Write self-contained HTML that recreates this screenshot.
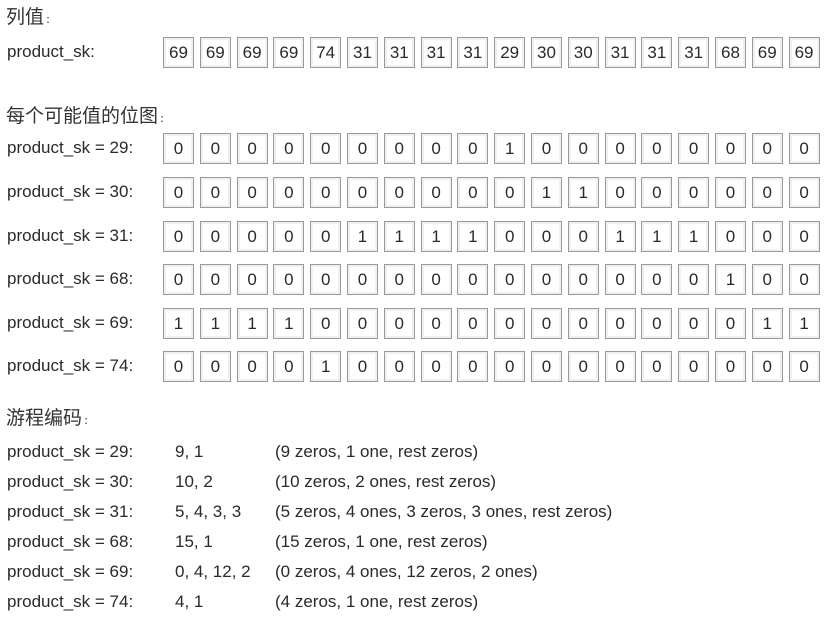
<!DOCTYPE html>
<html><head><meta charset="utf-8"><style>
body{margin:0;width:825px;height:621px;background:#fff;position:relative;overflow:hidden;font-family:"Liberation Sans","Noto Sans CJK SC",sans-serif;color:#2a2a2a;}
.t{position:absolute;white-space:nowrap;font-size:17px;line-height:20px;}
.h{position:absolute;white-space:nowrap;font-size:19px;line-height:22px;font-family:"Noto Sans CJK SC","WenQuanYi Zen Hei",sans-serif;color:#333;}
.h small{font-size:11px;}
.row{position:absolute;left:163px;display:flex;}
.b{width:29px;height:29px;border:1px solid #9a9a9a;box-shadow:inset 0 0 0 2px #f0f0f0;margin-right:5.8px;display:flex;align-items:center;justify-content:center;font-size:17px;color:#2a2a2a;box-sizing:content-box;}
</style></head><body>
<div class="h" style="left:6px;top:5px">列值<small> :</small></div>
<div class="t" style="left:7px;top:42px">product_sk:</div>
<div class="row" style="top:37px"><div class="b">69</div><div class="b">69</div><div class="b">69</div><div class="b">69</div><div class="b">74</div><div class="b">31</div><div class="b">31</div><div class="b">31</div><div class="b">31</div><div class="b">29</div><div class="b">30</div><div class="b">30</div><div class="b">31</div><div class="b">31</div><div class="b">31</div><div class="b">68</div><div class="b">69</div><div class="b">69</div></div>

<div class="h" style="left:6px;top:104px">每个可能值的位图<small> :</small></div>

<div class="t" style="left:7px;top:138px">product_sk = 29:</div>
<div class="row" style="top:133px"><div class="b">0</div><div class="b">0</div><div class="b">0</div><div class="b">0</div><div class="b">0</div><div class="b">0</div><div class="b">0</div><div class="b">0</div><div class="b">0</div><div class="b">1</div><div class="b">0</div><div class="b">0</div><div class="b">0</div><div class="b">0</div><div class="b">0</div><div class="b">0</div><div class="b">0</div><div class="b">0</div></div>

<div class="t" style="left:7px;top:182px">product_sk = 30:</div>
<div class="row" style="top:177px"><div class="b">0</div><div class="b">0</div><div class="b">0</div><div class="b">0</div><div class="b">0</div><div class="b">0</div><div class="b">0</div><div class="b">0</div><div class="b">0</div><div class="b">0</div><div class="b">1</div><div class="b">1</div><div class="b">0</div><div class="b">0</div><div class="b">0</div><div class="b">0</div><div class="b">0</div><div class="b">0</div></div>

<div class="t" style="left:7px;top:226px">product_sk = 31:</div>
<div class="row" style="top:221px"><div class="b">0</div><div class="b">0</div><div class="b">0</div><div class="b">0</div><div class="b">0</div><div class="b">1</div><div class="b">1</div><div class="b">1</div><div class="b">1</div><div class="b">0</div><div class="b">0</div><div class="b">0</div><div class="b">1</div><div class="b">1</div><div class="b">1</div><div class="b">0</div><div class="b">0</div><div class="b">0</div></div>

<div class="t" style="left:7px;top:269px">product_sk = 68:</div>
<div class="row" style="top:264px"><div class="b">0</div><div class="b">0</div><div class="b">0</div><div class="b">0</div><div class="b">0</div><div class="b">0</div><div class="b">0</div><div class="b">0</div><div class="b">0</div><div class="b">0</div><div class="b">0</div><div class="b">0</div><div class="b">0</div><div class="b">0</div><div class="b">0</div><div class="b">1</div><div class="b">0</div><div class="b">0</div></div>

<div class="t" style="left:7px;top:313px">product_sk = 69:</div>
<div class="row" style="top:308px"><div class="b">1</div><div class="b">1</div><div class="b">1</div><div class="b">1</div><div class="b">0</div><div class="b">0</div><div class="b">0</div><div class="b">0</div><div class="b">0</div><div class="b">0</div><div class="b">0</div><div class="b">0</div><div class="b">0</div><div class="b">0</div><div class="b">0</div><div class="b">0</div><div class="b">1</div><div class="b">1</div></div>

<div class="t" style="left:7px;top:356px">product_sk = 74:</div>
<div class="row" style="top:351px"><div class="b">0</div><div class="b">0</div><div class="b">0</div><div class="b">0</div><div class="b">1</div><div class="b">0</div><div class="b">0</div><div class="b">0</div><div class="b">0</div><div class="b">0</div><div class="b">0</div><div class="b">0</div><div class="b">0</div><div class="b">0</div><div class="b">0</div><div class="b">0</div><div class="b">0</div><div class="b">0</div></div>

<div class="h" style="left:6px;top:406px">游程编码<small> :</small></div>

<div class="t" style="left:7px;top:442px">product_sk = 29:</div><div class="t" style="left:175px;top:442px">9, 1</div><div class="t" style="left:275px;top:442px">(9 zeros, 1 one, rest zeros)</div>
<div class="t" style="left:7px;top:472px">product_sk = 30:</div><div class="t" style="left:175px;top:472px">10, 2</div><div class="t" style="left:275px;top:472px">(10 zeros, 2 ones, rest zeros)</div>
<div class="t" style="left:7px;top:502px">product_sk = 31:</div><div class="t" style="left:175px;top:502px">5, 4, 3, 3</div><div class="t" style="left:275px;top:502px">(5 zeros, 4 ones, 3 zeros, 3 ones, rest zeros)</div>
<div class="t" style="left:7px;top:532px">product_sk = 68:</div><div class="t" style="left:175px;top:532px">15, 1</div><div class="t" style="left:275px;top:532px">(15 zeros, 1 one, rest zeros)</div>
<div class="t" style="left:7px;top:562px">product_sk = 69:</div><div class="t" style="left:175px;top:562px">0, 4, 12, 2</div><div class="t" style="left:275px;top:562px">(0 zeros, 4 ones, 12 zeros, 2 ones)</div>
<div class="t" style="left:7px;top:592px">product_sk = 74:</div><div class="t" style="left:175px;top:592px">4, 1</div><div class="t" style="left:275px;top:592px">(4 zeros, 1 one, rest zeros)</div>
</body></html>
